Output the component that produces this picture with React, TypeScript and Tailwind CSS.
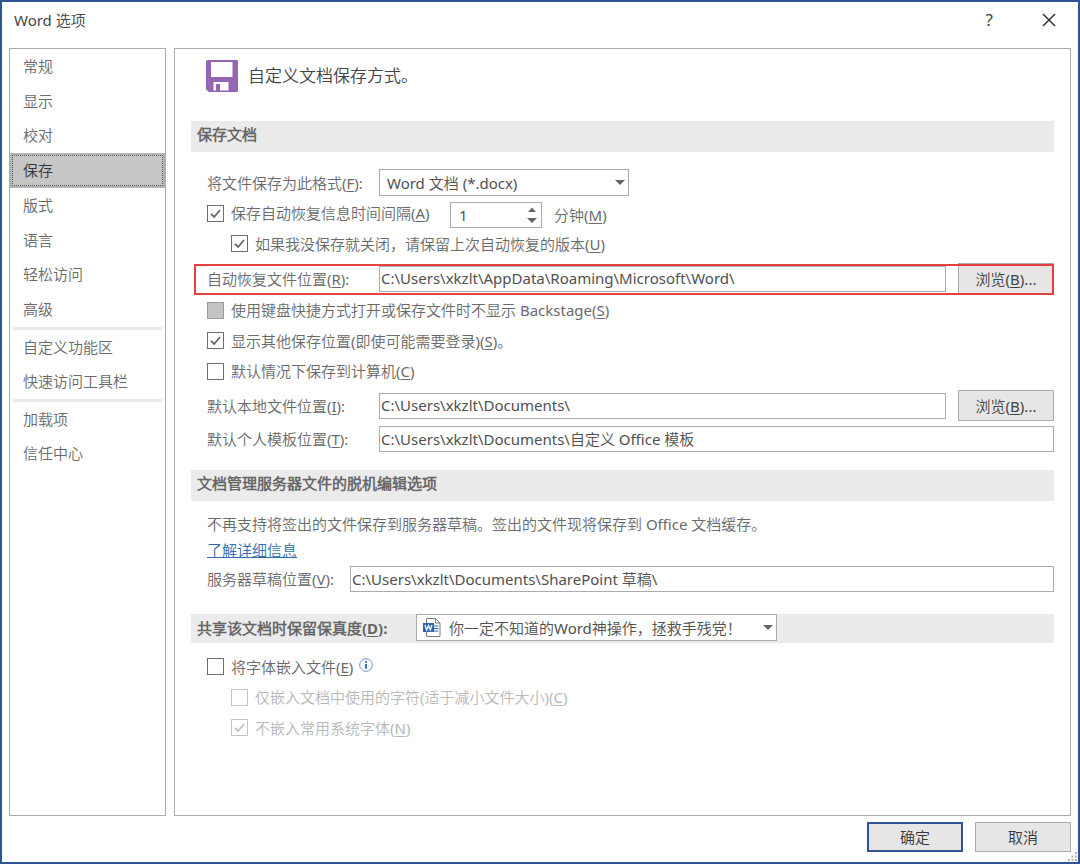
import { ReactNode, useState } from "react";

const NAV_GROUPS = [
  {
    height: "h-[278px]",
    items: ["常规", "显示", "校对", "保存", "版式", "语言", "轻松访问", "高级"],
  },
  { height: "h-[69px]", items: ["自定义功能区", "快速访问工具栏"] },
  { height: "h-[69px]", items: ["加载项", "信任中心"] },
];

// ---------------------------------------------------------------------------
// Form controls
// ---------------------------------------------------------------------------
interface CheckProps {
  id: string;
  children: ReactNode;
  checked?: boolean;
  disabled?: boolean;
  filled?: boolean;
}

function Check({ id, children, checked = false, disabled, filled }: CheckProps) {
  const [on, setOn] = useState(checked);
  const border = disabled ? "border-[#c6c6c6]" : "border-[#6e6e6e]";
  return (
    <div className="flex items-center gap-[7px]">
      <span className="relative flex h-[17px] w-[17px] shrink-0">
        <input
          id={id}
          type="checkbox"
          checked={on}
          disabled={disabled}
          onChange={() => setOn(!on)}
          className={`h-[17px] w-[17px] appearance-none border ${
            filled ? "border-[#9a9a9a] bg-[#c3c3c3]" : `bg-white ${border}`
          }`}
        />
        {on && (
          <svg viewBox="0 0 17 17" fill="none" className="pointer-events-none absolute inset-0">
            <path
              d="M4 8.8L7.2 12L13 5"
              stroke={disabled ? "#c0c0c0" : "#666666"}
              strokeWidth="1.8"
            />
          </svg>
        )}
      </span>
      <label htmlFor={id} className={disabled ? "text-[#b8b8b8]" : ""}>
        {children}
      </label>
    </div>
  );
}

function PathInput({ id, value }: { id: string; value: string }) {
  return (
    <input
      id={id}
      type="text"
      defaultValue={value}
      className="h-[26px] min-w-0 flex-1 border border-[#ababab] bg-white px-px pb-0.5 text-[#505050] outline-none"
    />
  );
}

function BrowseButton() {
  return (
    <button
      type="button"
      className="h-[31px] w-24 shrink-0 border border-[#ababab] bg-[#e6e6e6] text-[#444444]"
    >
      浏览(<u>B</u>)...
    </button>
  );
}

function Arrow({ up = false }: { up?: boolean }) {
  return (
    <svg width="10" height="5" viewBox="0 0 10 5" fill="#666666">
      <path d={up ? "M1 5L5 0.5L9 5Z" : "M0 0H10L5 5Z"} />
    </svg>
  );
}

// ---------------------------------------------------------------------------
// Icons
// ---------------------------------------------------------------------------
function SaveIcon() {
  return (
    <svg width="32" height="32" viewBox="0 0 32 32" className="shrink-0">
      <path
        fillRule="evenodd"
        fill="#9466b5"
        d="M1.500 0H30.500Q32 0 32 1.500V30.500Q32 32 30.500 32H3L0 29.500V1.500Q0 0 1.500 0ZM5 2V17H26.500V2ZM7.500 22V30.500H10V24H14V30.500H22.500V22Z"
      />
    </svg>
  );
}

function WordFileIcon() {
  return (
    <svg width="18" height="19" viewBox="0 0 18 19" fill="none">
      <path d="M3.500 0.500H12.500L17 5V18.500H3.500Z" fill="#ffffff" stroke="#7a7a7a" />
      <path d="M12.500 0.500V5H17" stroke="#7a7a7a" />
      <path d="M11 8H15.500M11 10.500H15.500M11 13H15.500" stroke="#2b63b5" />
      <path d="M0 5H11V14H0Z" fill="#2b63b5" />
      <path d="M2 7L3.700 12L5.500 7.500L7.300 12L9 7" stroke="#ffffff" strokeWidth="1.300" />
    </svg>
  );
}

function InfoIcon() {
  return (
    <svg width="14" height="14" viewBox="0 0 14 14" fill="none">
      <circle cx="7" cy="7" r="6.300" stroke="#6f93cf" />
      <path d="M7 6V10.800M7 3V4.800" stroke="#2f5db0" strokeWidth="1.800" />
    </svg>
  );
}

function SizeGrip() {
  return (
    <svg width="10" height="10" viewBox="0 0 10 10" fill="#b5b5b5">
      <path d="M7 0H9V2H7ZM7 3.500H9V5.500H7ZM7 7H9V9H7ZM3.500 3.500H5.500V5.500H3.500ZM3.500 7H5.500V9H3.500ZM0 7H2V9H0Z" />
    </svg>
  );
}

// ---------------------------------------------------------------------------
// Layout parts
// ---------------------------------------------------------------------------
function Sidebar() {
  const [active, setActive] = useState("保存");
  return (
    <nav className="w-[157px] shrink-0 border border-[#ababab]">
      {NAV_GROUPS.map((group, idx) => (
        <div key={group.items[0]}>
          {idx > 0 && <div className="mx-[3px] h-[3px] bg-[#e8e8e8]" />}
          <div className={`flex flex-col ${group.height}`}>
            {group.items.map((item) => (
              <button
                key={item}
                type="button"
                onClick={() => setActive(item)}
                className={`flex-1 p-0.5 text-left ${
                  item === active ? "bg-[#b4b4b4] text-[#363636]" : "text-[#6a6a6a]"
                }`}
              >
                <span
                  className={`flex h-full items-center border border-dotted pb-px pl-[10px] ${
                    item === active ? "border-[#555555] bg-[#c6c6c6]" : "border-transparent"
                  }`}
                >
                  {item}
                </span>
              </button>
            ))}
          </div>
        </div>
      ))}
    </nav>
  );
}

function SectionTitle({ children }: { children: ReactNode }) {
  return (
    <h2 className="flex h-[31px] items-center bg-[#ebebeb] pb-1.5 pl-1.5 font-bold text-[#666666]">
      {children}
    </h2>
  );
}

function SavePanel() {
  return (
    <main className="min-w-0 flex-1 border border-[#ababab] px-4 pb-6">
      <header className="mb-[18px] flex h-[54px] items-center gap-[10px] pl-[15px]">
        <SaveIcon />
        <h1 className="text-[17px] text-[#444444]">自定义文档保存方式。</h1>
      </header>

      <SectionTitle>保存文档</SectionTitle>
      <div className="mt-[17px] flex h-[27px] items-center pl-4">
        <label htmlFor="format" className="w-[172px]">
          将文件保存为此格式(<u>F</u>):
        </label>
        <div className="relative h-[27px] w-[250px]">
          <select
            id="format"
            className="h-full w-full appearance-none border border-[#ababab] bg-white pl-[7px] text-[#505050]"
          >
            <option>Word 文档 (*.docx)</option>
          </select>
          <span className="pointer-events-none absolute right-1 top-[11px]">
            <Arrow />
          </span>
        </div>
      </div>

      <div className="mt-[6px] flex h-[26px] items-center pl-4">
        <div className="w-[243px] shrink-0 pb-1">
          <Check id="autosave" checked>
            保存自动恢复信息时间间隔(<u>A</u>)
          </Check>
        </div>
        <div className="flex h-[26px] w-[92px] items-center border border-[#ababab] pr-1">
          <input
            id="minutes"
            type="text"
            defaultValue="1"
            className="min-w-0 flex-1 pl-2 text-[#505050] outline-none"
          />
          <div className="flex flex-col gap-1.5">
            <button type="button" aria-label="增加">
              <Arrow up />
            </button>
            <button type="button" aria-label="减少">
              <Arrow />
            </button>
          </div>
        </div>
        <label htmlFor="minutes" className="ml-3">
          分钟(<u>M</u>)
        </label>
      </div>

      <div className="flex h-[31px] items-center pl-10">
        <Check id="keep" checked>
          如果我没保存就关闭，请保留上次自动恢复的版本(<u>U</u>)
        </Check>
      </div>

      <div className="relative mt-[5px] flex h-[31px] items-center pb-0.5 pl-4">
        <label htmlFor="recovery" className="w-[172px] shrink-0">
          自动恢复文件位置(<u>R</u>):
        </label>
        <PathInput id="recovery" value={"C:\\Users\\xkzlt\\AppData\\Roaming\\Microsoft\\Word\\"} />
        <div className="ml-3 flex">
          <BrowseButton />
        </div>
        {/* Highlight frame */}
        <div className="pointer-events-none absolute inset-y-0 left-[3px] right-0 border-2 border-[#e84040]" />
      </div>

      <div className="pl-4">
        <div className="flex h-[30px] items-center">
          <Check id="backstage" filled>
            使用键盘快捷方式打开或保存文件时不显示 Backstage(<u>S</u>)
          </Check>
        </div>
        <div className="flex h-[31px] items-center">
          <Check id="places" checked>
            显示其他保存位置(即使可能需要登录)(<u>S</u>)。
          </Check>
        </div>
        <div className="flex h-[30px] items-center">
          <Check id="computer">
            默认情况下保存到计算机(<u>C</u>)
          </Check>
        </div>
      </div>

      <div className="mt-1 flex h-[31px] items-center pl-4">
        <label htmlFor="local" className="w-[172px] shrink-0">
          默认本地文件位置(<u>I</u>):
        </label>
        <PathInput id="local" value={"C:\\Users\\xkzlt\\Documents\\"} />
        <div className="ml-3 flex">
          <BrowseButton />
        </div>
      </div>
      <div className="mt-[5px] flex h-[26px] items-center pl-4">
        <label htmlFor="template" className="w-[172px] shrink-0">
          默认个人模板位置(<u>T</u>):
        </label>
        <PathInput id="template" value={"C:\\Users\\xkzlt\\Documents\\自定义 Office 模板"} />
      </div>

      <div className="mt-[18px]">
        <SectionTitle>文档管理服务器文件的脱机编辑选项</SectionTitle>
      </div>
      <div className="mt-[10px] pl-4 leading-[26px]">
        <p>不再支持将签出的文件保存到服务器草稿。签出的文件现将保存到 Office 文档缓存。</p>
        <a href="#details" className="text-[#2f6eb0] underline">
          了解详细信息
        </a>
      </div>
      <div className="mt-[3px] flex h-[26px] items-center pl-4">
        <label htmlFor="drafts" className="w-[143px] shrink-0">
          服务器草稿位置(<u>V</u>):
        </label>
        <PathInput id="drafts" value={"C:\\Users\\xkzlt\\Documents\\SharePoint 草稿\\"} />
      </div>

      <div className="mt-[22px] flex h-[29px] items-start bg-[#ebebeb] pl-1.5">
        <label htmlFor="document" className="w-[219px] font-bold leading-[28px] text-[#666666]">
          共享该文档时保留保真度(<u>D</u>):
        </label>
        <div className="relative h-[27px] w-[361px]">
          <select
            id="document"
            className="h-full w-full appearance-none border border-[#ababab] bg-white pl-8 text-[#505050]"
          >
            <option>你一定不知道的Word神操作，拯救手残党！</option>
          </select>
          <span className="pointer-events-none absolute left-[7px] top-1">
            <WordFileIcon />
          </span>
          <span className="pointer-events-none absolute right-1 top-[11px]">
            <Arrow />
          </span>
        </div>
      </div>

      <div className="mt-2 pl-4">
        <div className="flex h-[31px] items-center gap-1.5">
          <Check id="embed">
            将字体嵌入文件(<u>E</u>)
          </Check>
          <span className="pb-1">
            <InfoIcon />
          </span>
        </div>
        <div className="flex h-[30px] items-center pl-6">
          <Check id="used" disabled>
            仅嵌入文档中使用的字符(适于减小文件大小)(<u>C</u>)
          </Check>
        </div>
        <div className="flex h-[31px] items-center pl-6">
          <Check id="system" checked disabled>
            不嵌入常用系统字体(<u>N</u>)
          </Check>
        </div>
      </div>
    </main>
  );
}

export default function App() {
  return (
    <div className="flex min-h-screen flex-col border-2 border-[#2f5496] bg-white font-['Noto_Sans','Noto_Sans_CJK_SC_DemiLight','Noto_Sans_CJK_SC',sans-serif] text-[15px] leading-5 font-normal text-[#6a6a6a] [&_u]:underline-offset-2">
      <div className="flex h-[46px] items-center justify-between pb-[11px] pl-3 pr-[22px] text-[#444444]">
        <span>Word 选项</span>
        <div className="flex items-center gap-[49px]">
          <button type="button" aria-label="帮助" className="text-[17px]">
            ?
          </button>
          <button type="button" aria-label="关闭">
            <svg width="14" height="14" viewBox="0 0 14 14" fill="none">
              <path d="M1 1L13 13M13 1L1 13" stroke="#333333" strokeWidth="1.500" />
            </svg>
          </button>
        </div>
      </div>

      <div className="flex flex-1 gap-2 pl-[7px] pr-[7px]">
        <Sidebar />
        <SavePanel />
      </div>

      <footer className="relative flex justify-end gap-3 pb-[10px] pr-[7px] pt-[6px] text-[#363636]">
        <button type="button" className="h-[30px] w-24 border-2 border-[#2f5496] bg-[#e6e6e6]">
          确定
        </button>
        <button type="button" className="h-[30px] w-24 border border-[#ababab] bg-[#e6e6e6]">
          取消
        </button>
        <div className="absolute bottom-0 right-0">
          <SizeGrip />
        </div>
      </footer>
    </div>
  );
}
